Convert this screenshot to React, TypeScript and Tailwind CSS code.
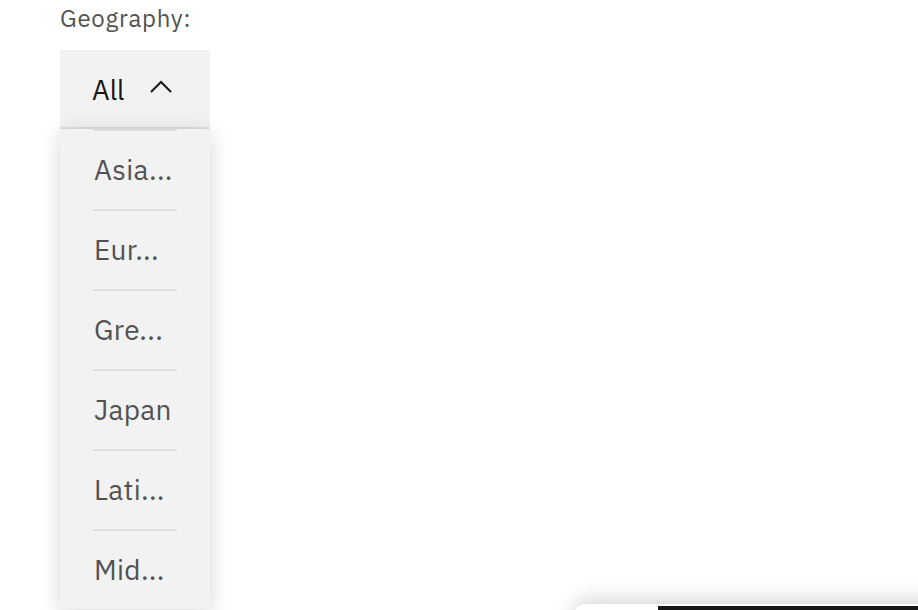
import React from 'react';

const regions = [
  { short: 'Asia...', full: 'Asia Pacific' },
  { short: 'Eur...', full: 'Europe' },
  { short: 'Gre...', full: 'Greater China' },
  { short: 'Japan', full: 'Japan' },
  { short: 'Lati...', full: 'Latin America' },
  { short: 'Mid...', full: 'Middle East & Africa' },
];

export default function App() {
  return (
    <div
      className="relative h-[610px] w-[918px] overflow-hidden bg-white"
      style={{ fontFamily: '"IBM Plex Sans", "Noto Sans", sans-serif' }}
    >
      <div className="pl-[60px]">
        {/* Label */}
        <div className="pt-[2px] text-[24px] leading-[32px] tracking-[0.75px] text-[#525252]">
          Geography:
        </div>

        {/* Dropdown field */}
        <div className="mt-[16px] w-[150px]">
          <button className="flex h-[79px] w-full items-center border-b-2 border-[#e0e0e0] bg-[#f2f2f2] pl-[32px] pr-[38px] text-left">
            <span className="flex-1 pt-[4px] text-[27.5px] text-[#161616]">All</span>
            <svg width="22" height="14" viewBox="0 0 22 14" className="mb-[3px]">
              <polyline points="1,12 11,2 21,12" fill="none" stroke="#161616" strokeWidth="2" />
            </svg>
          </button>

          {/* Menu */}
          <ul className="bg-[#f2f2f2] shadow-[0_4px_20px_rgba(0,0,0,0.16)]">
            {regions.map((r) => (
              <li key={r.full} title={r.full} className="px-[33px]">
                <div className="flex h-[80px] items-center border-t-2 border-[#dedede] pl-[1px] text-[28px] tracking-[0.3px] text-[#525252]">
                  {r.short}
                </div>
              </li>
            ))}
          </ul>
        </div>
      </div>

      {/* Floating bar in the corner */}
      <div className="absolute left-[575px] top-[604px] flex h-[30px] w-[360px] overflow-hidden rounded-tl-[10px] shadow-[0_-4px_20px_rgba(0,0,0,0.18)]">
        <div className="w-[83px] bg-white" />
        <div className="mt-[2px] flex-1 bg-[#161616]" />
      </div>
    </div>
  );
}
